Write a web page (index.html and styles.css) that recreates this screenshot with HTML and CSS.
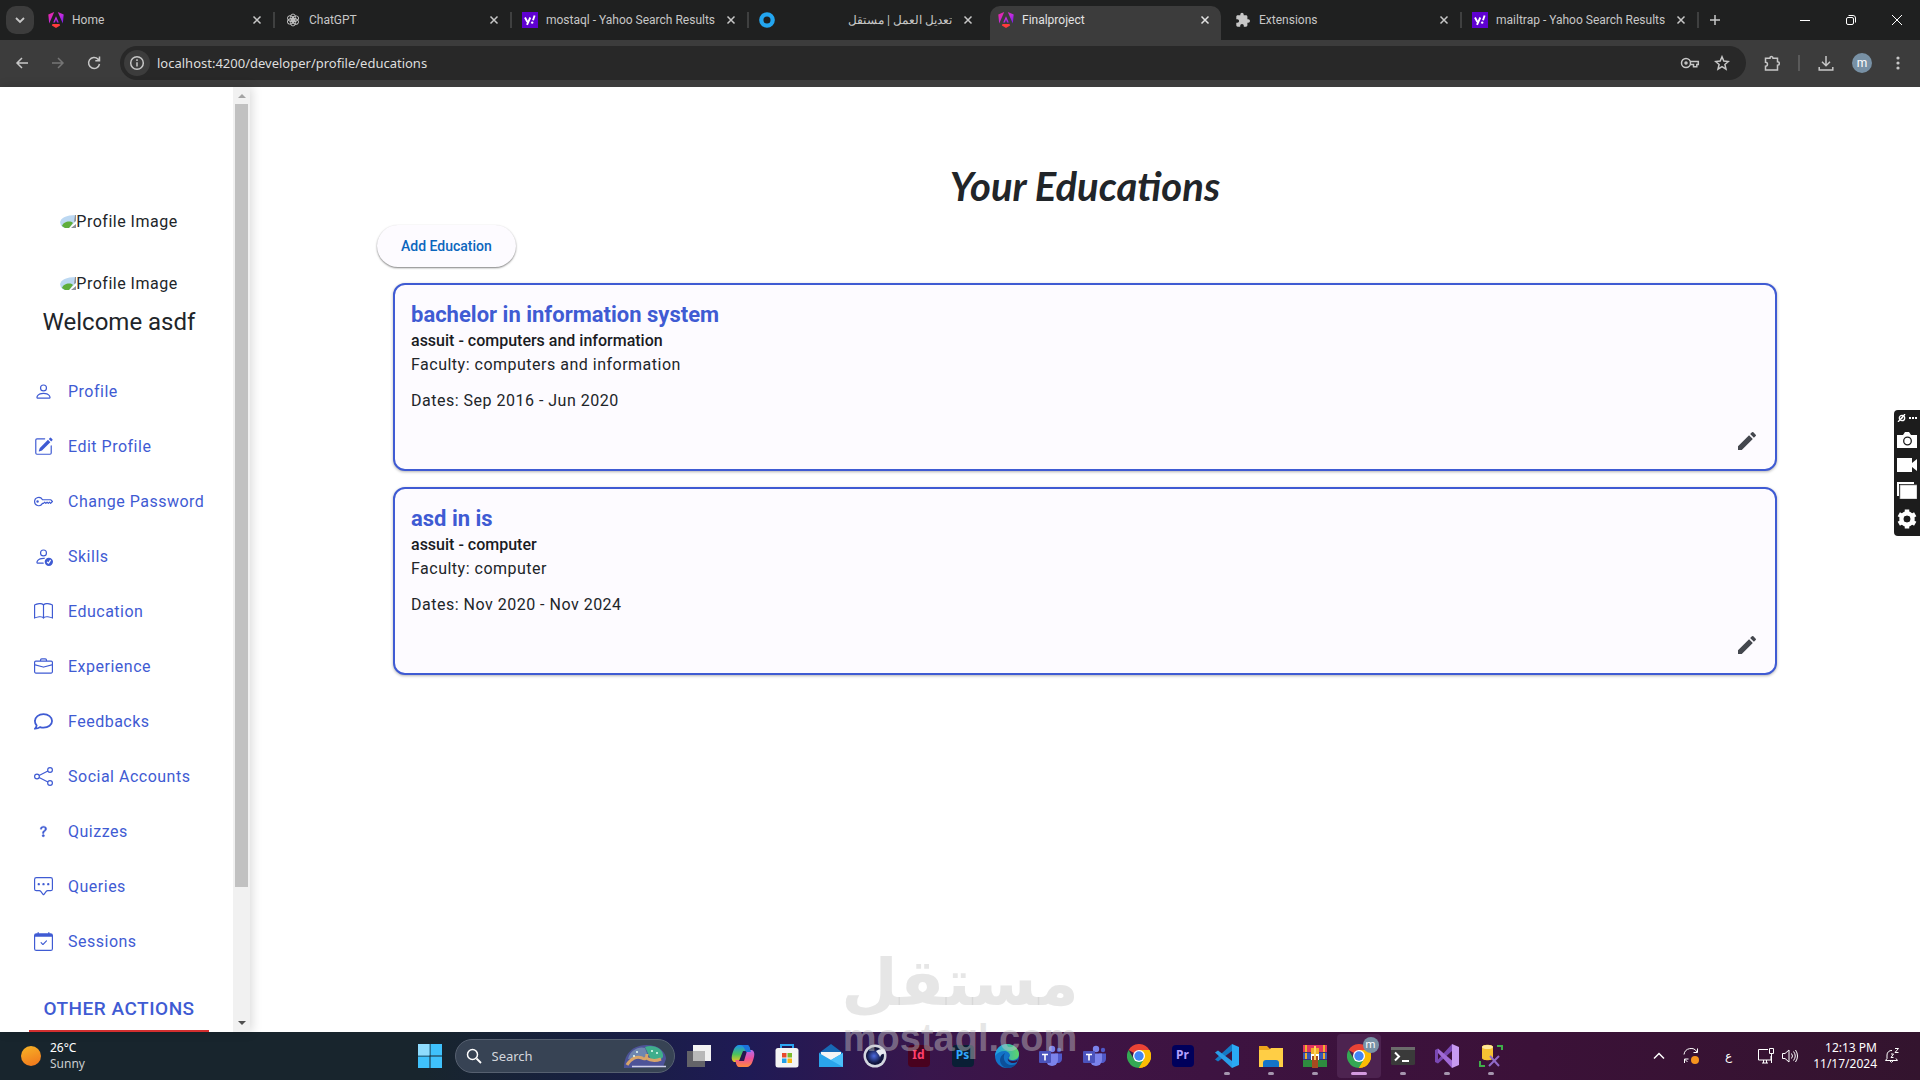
FILE: index.html
```html
<!DOCTYPE html>
<html lang="en">
<head>
    <meta charset="UTF-8">
    <meta name="viewport" content="width=device-width, initial-scale=1.0">
    <title>Finalproject</title>
    <link rel="stylesheet" href="styles.css">
</head>
<body>
    <!-- Shared shapes -->
    <svg class="defs" aria-hidden="true">
        <defs>
            <linearGradient id="ng" x1="0" y1="0" x2="1" y2="1"><stop offset="0" stop-color="#f0269a"/><stop offset=".55" stop-color="#c22be0"/><stop offset="1" stop-color="#6a1be8"/></linearGradient>
            <linearGradient id="cop1" x1="0" y1="0" x2="0" y2="1"><stop offset="0" stop-color="#1a8ff0"/><stop offset=".55" stop-color="#4cc35a"/><stop offset="1" stop-color="#f4c521"/></linearGradient>
            <linearGradient id="cop2" x1="0" y1="0" x2="0" y2="1"><stop offset="0" stop-color="#b06cf0"/><stop offset=".5" stop-color="#ee4f9b"/><stop offset="1" stop-color="#ff8a3c"/></linearGradient>
            <linearGradient id="edge1" x1="0" y1="0" x2="1" y2="0"><stop offset="0" stop-color="#1a9bea"/><stop offset="1" stop-color="#5fd668"/></linearGradient>
            <radialGradient id="ball"><stop offset="0" stop-color="#4b6ae0"/><stop offset="1" stop-color="#10143c"/></radialGradient>
            <symbol id="angular" viewBox="0 0 16 16">
                <path fill="url(#ng)" d="M9.800 0 15.700 2.600 14.800 11.500zM6.200 0 1.200 11.500.3 2.600zM8 4.200 10.800 10.500H9.100L8 7.600 6.900 10.500H5.200z"/>
                <path fill="#ff3b3b" d="M4.500 12h7l.6 1.500L8 16l-4.100-2.500z"/>
            </symbol>
            <symbol id="yahoo" viewBox="0 0 16 16">
                <path fill="#5f01d1" d="M0 0h16v16H0z"/>
                <path fill="none" stroke="#fff" stroke-width="1.900" d="m3 5.500 2.400 4.500M8.300 5.500 5 12.800M12.600 3.500 11 8.200"/>
                <circle cx="10.200" cy="10.600" r="1.200" fill="#fff"/>
            </symbol>
            <symbol id="close" viewBox="0 0 10 10"><path fill="none" stroke="currentColor" stroke-width="1.500" d="m1.500 1.500 7 7m0-7-7 7"/></symbol>
            <symbol id="puzzle" viewBox="0 0 16 16"><path fill="currentColor" d="M13.300 7.300h-.9V4.700c0-.8-.6-1.400-1.400-1.400H8.700v-.9a1.700 1.700 0 0 0-3.400 0v.9H2.700c-.8 0-1.400.6-1.400 1.400v2.500h1a1.800 1.800 0 0 1 0 3.600h-1v2.500c0 .8.6 1.400 1.400 1.400h2.500v-1a1.800 1.800 0 0 1 3.600 0v1H11c.8 0 1.400-.6 1.400-1.400v-2.600h.9a1.700 1.700 0 0 0 0-3.400z"/></symbol>
            <symbol id="teams" viewBox="0 0 24 24">
                <circle cx="13" cy="5" r="3.200" fill="#7b83eb"/><circle cx="20" cy="6" r="2.200" fill="#5059c9"/>
                <path fill="#5059c9" d="M16 9.500h7V15a4 4 0 0 1-6 3.500z"/>
                <path fill="#7b83eb" d="M7 9.500h12V16a6 6 0 0 1-12 0z"/>
                <rect y="7" width="12" height="12" rx="1" fill="#4b53bc"/>
                <path fill="none" stroke="#fff" stroke-width="1.600" d="M3 10.500h6M6 10.500v6"/>
            </symbol>
            <symbol id="chrome" viewBox="0 0 24 24">
                <path fill="#ea4335" d="M12 12 1.600 6A12 12 0 0 1 22.400 6z"/>
                <path fill="#fbbc04" d="M12 12V6h10.400A12 12 0 0 1 12 24z"/>
                <path fill="#34a853" d="m12 12 5.200 3L12 24A12 12 0 0 1 1.600 6l5.200 9z"/>
                <path fill="#fbbc04" d="M17.200 15 12 24A12 12 0 0 0 22.400 6H12z"/>
                <circle cx="12" cy="12" r="6" fill="#fff"/><circle cx="12" cy="12" r="4.700" fill="#4285f4"/>
            </symbol>
            <symbol id="broken" viewBox="0 0 16 14">
                <path fill="#bcd8f2" d="M0 7C1 3 6 0 16 0v6L9 13H4C1 12 0 10 0 7z"/>
                <path fill="#5fae3c" d="M2 11c1-4 8-6 11-3l-4 5H5z"/>
                <path fill="#8b9096" d="M15 0h1v6l-2 1zM16 9v4h-5z"/>
            </symbol>
            <symbol id="pencil" viewBox="0 0 24 24"><path fill="currentColor" d="M3 17.250V21h3.750L17.810 9.940l-3.750-3.750zM20.710 7.040a1 1 0 0 0 0-1.410l-2.340-2.340a1 1 0 0 0-1.410 0l-1.830 1.830 3.750 3.750z"/></symbol>
        </defs>
    </svg>

    <!-- Browser window -->
    <header class="tabs">
        <button class="tab-search" aria-label="Search tabs"><svg viewBox="0 0 10 10" width="10" height="10"><path fill="none" stroke="currentColor" stroke-width="1.800" d="m1 3 4 4 4-4"/></svg></button>
        <div class="tab"><svg class="favicon"><use href="#angular"/></svg><span>Home</span><button aria-label="Close"><svg><use href="#close"/></svg></button></div>
        <div class="tab"><svg class="favicon" viewBox="0 0 16 16"><g fill="none" stroke="#c4c4c4" stroke-width=".9"><ellipse cx="8" cy="5.500" rx="2.600" ry="3.500"/><ellipse cx="8" cy="5.500" rx="2.600" ry="3.500" transform="rotate(60 8 8)"/><ellipse cx="8" cy="5.500" rx="2.600" ry="3.500" transform="rotate(120 8 8)"/><ellipse cx="8" cy="5.500" rx="2.600" ry="3.500" transform="rotate(180 8 8)"/><ellipse cx="8" cy="5.500" rx="2.600" ry="3.500" transform="rotate(240 8 8)"/><ellipse cx="8" cy="5.500" rx="2.600" ry="3.500" transform="rotate(300 8 8)"/></g></svg><span>ChatGPT</span><button aria-label="Close"><svg><use href="#close"/></svg></button></div>
        <div class="tab"><svg class="favicon"><use href="#yahoo"/></svg><span>mostaql - Yahoo Search Results</span><button aria-label="Close"><svg><use href="#close"/></svg></button></div>
        <div class="tab no-line"><svg class="favicon" viewBox="0 0 16 16"><circle cx="8" cy="8" r="5.700" fill="none" stroke="#23a6f0" stroke-width="4.300"/></svg><span dir="rtl">تعديل العمل | مستقل</span><button aria-label="Close"><svg><use href="#close"/></svg></button></div>
        <div class="tab active"><svg class="favicon"><use href="#angular"/></svg><span>Finalproject</span><button aria-label="Close"><svg><use href="#close"/></svg></button></div>
        <div class="tab"><svg class="favicon"><use href="#puzzle"/></svg><span>Extensions</span><button aria-label="Close"><svg><use href="#close"/></svg></button></div>
        <div class="tab"><svg class="favicon"><use href="#yahoo"/></svg><span>mailtrap - Yahoo Search Results</span><button aria-label="Close"><svg><use href="#close"/></svg></button></div>
        <button class="new-tab" aria-label="New tab"><svg viewBox="0 0 12 12" width="12" height="12"><path stroke="currentColor" stroke-width="1.500" d="M6 1v10M1 6h10"/></svg></button>
        <div class="window-buttons">
            <button aria-label="Minimize"><svg viewBox="0 0 12 12"><path stroke="#fff" d="M1 6.500h10"/></svg></button>
            <button aria-label="Restore"><svg viewBox="0 0 12 12"><g fill="none" stroke="#fff"><rect x="1.500" y="3.500" width="7" height="7" rx="1.500"/><path d="M3.500 1.500H8a2.500 2.500 0 0 1 2.500 2.500v4.500"/></g></svg></button>
            <button aria-label="Close window"><svg viewBox="0 0 12 12"><path stroke="#fff" d="m1 1 10 10m0-10L1 11"/></svg></button>
        </div>
    </header>
    <nav class="toolbar">
        <button aria-label="Back"><svg viewBox="0 0 16 16"><path d="M14 8H3m5-5L3 8l5 5"/></svg></button>
        <button class="dim" aria-label="Forward"><svg viewBox="0 0 16 16"><path d="M2 8h11M8 3l5 5-5 5"/></svg></button>
        <button aria-label="Reload"><svg viewBox="0 0 16 16"><path d="M13.500 9A5.500 5.500 0 1 1 12 4.100l1.500 1.500M13.500 1.500v4.300H9.300"/></svg></button>
        <div class="address">
            <button class="info" aria-label="Site information"><svg viewBox="0 0 16 16"><circle cx="8" cy="8" r="6.300"/><path d="M8 7.200v4.300M8 4.300v1.600"/></svg></button>
            <input type="text" aria-label="Address" value="localhost:4200/developer/profile/educations">
            <button aria-label="Passwords"><svg viewBox="0 0 20 16" width="20"><circle cx="6" cy="8" r="4.500"/><circle cx="6" cy="8" r="1"/><path d="M10.300 6.500h8v3h-1.500v2.300h-3.300V9.500h-3.200"/></svg></button>
            <button aria-label="Bookmark"><svg viewBox="0 0 16 16"><path d="m8 1.800 1.800 4.300 4.600.4-3.500 3 1.100 4.600L8 11.700l-4 2.400 1.100-4.600-3.500-3 4.600-.4z"/></svg></button>
        </div>
        <button aria-label="Extensions"><svg viewBox="0 0 16 16"><path d="M1.500 3.200H6c0-2.400 3-2.400 3 0h4.500v3.600c2.400 0 2.400 3.400 0 3.400V15h-12v-3.800c2.600 0 2.600-4 0-4z"/></svg></button>
        <span class="divider"></span>
        <button aria-label="Downloads"><svg viewBox="0 0 16 16"><path d="M8 1v9.500M4 6.800l4 4 4-4M1.200 12v3h13.600v-3"/></svg></button>
        <button class="avatar" aria-label="Account">m</button>
        <button aria-label="Menu"><svg viewBox="0 0 16 16"><g fill="#c7c7c7" stroke="none"><circle cx="8" cy="3" r="1.600"/><circle cx="8" cy="8" r="1.600"/><circle cx="8" cy="13" r="1.600"/></g></svg></button>
    </nav>

    <!-- Page -->
    <div class="page">
        <aside class="sidebar">
            <div class="sidebar-content">
                <div class="profile-image"><svg><use href="#broken"/></svg>Profile Image</div>
                <div class="profile-image"><svg><use href="#broken"/></svg>Profile Image</div>
                <h3>Welcome asdf</h3>
                <ul class="menu">
                    <li><a href="#"><svg viewBox="0 0 16 16"><path d="M8 8a3 3 0 1 0 0-6 3 3 0 0 0 0 6m2-3a2 2 0 1 1-4 0 2 2 0 0 1 4 0m4 8c0 1-1 1-1 1H3s-1 0-1-1 1-4 6-4 6 3 6 4m-1-.004c-.001-.246-.154-.986-.832-1.664C11.516 10.680 10.289 10 8 10s-3.516.68-4.168 1.332c-.678.678-.83 1.418-.832 1.664z"/></svg>Profile</a></li>
                    <li><a href="#"><svg viewBox="0 0 16 16"><path d="M15.502 1.940a.5.5 0 0 1 0 .706L14.459 3.690l-2-2L13.502.646a.5.5 0 0 1 .707 0l1.293 1.293zm-1.750 2.456-2-2L4.939 9.210a.5.5 0 0 0-.121.196l-.805 2.414a.25.25 0 0 0 .316.316l2.414-.805a.5.5 0 0 0 .196-.12z"/><path fill-rule="evenodd" d="M1 13.500A1.500 1.500 0 0 0 2.500 15h11a1.500 1.500 0 0 0 1.500-1.500v-6a.5.5 0 0 0-1 0v6a.5.5 0 0 1-.5.5h-11a.5.5 0 0 1-.5-.5v-11a.5.5 0 0 1 .5-.5H9a.5.5 0 0 0 0-1H2.500A1.500 1.500 0 0 0 1 2.500z"/></svg>Edit Profile</a></li>
                    <li><a href="#"><svg viewBox="0 0 16 16"><path d="M0 8a4 4 0 0 1 7.465-2H14a.5.5 0 0 1 .354.146l1.500 1.500a.5.5 0 0 1 0 .708l-1.500 1.500a.5.5 0 0 1-.708 0L13 9.207l-.646.647a.5.5 0 0 1-.708 0L11 9.207l-.646.647a.5.5 0 0 1-.708 0L9 9.207l-.646.647A.5.5 0 0 1 8 10h-.535A4 4 0 0 1 0 8m4-3a3 3 0 1 0 2.712 4.285A.5.5 0 0 1 7.163 9h.63l.853-.854a.5.5 0 0 1 .708 0l.646.647.646-.647a.5.5 0 0 1 .708 0l.646.647.646-.647a.5.5 0 0 1 .708 0l.646.647.793-.793-1-1h-6.630a.5.5 0 0 1-.451-.285A3 3 0 0 0 4 5"/><path d="M4 8a1 1 0 1 1-2 0 1 1 0 0 1 2 0"/></svg>Change Password</a></li>
                    <li><a href="#"><svg viewBox="0 0 16 16"><path d="M12.500 16a3.500 3.500 0 1 0 0-7 3.500 3.500 0 0 0 0 7m1.679-4.493-1.335 2.226a.75.75 0 0 1-1.174.144l-.774-.773a.5.5 0 0 1 .708-.708l.547.548 1.170-1.951a.5.5 0 1 1 .858.514M11 5a3 3 0 1 1-6 0 3 3 0 0 1 6 0M8 7a2 2 0 1 0 0-4 2 2 0 0 0 0 4"/><path d="M8.256 14a4.500 4.500 0 0 1-.229-1.004H3c.001-.246.154-.986.832-1.664C4.484 10.680 5.711 10 8 10q.39 0 .74.025c.226-.341.496-.65.804-.918Q8.844 9.002 8 9c-5 0-6 3-6 4s1 1 1 1z"/></svg>Skills</a></li>
                    <li><a href="#"><svg viewBox="0 0 16 16"><path d="M1 2.828c.885-.37 2.154-.769 3.388-.893 1.330-.134 2.458.063 3.112.752v9.746c-.935-.53-2.120-.603-3.213-.493-1.180.12-2.370.461-3.287.811zm7.500-.141c.654-.689 1.782-.886 3.112-.752 1.234.124 2.503.523 3.388.893v9.923c-.918-.35-2.107-.692-3.287-.81-1.094-.111-2.278-.039-3.213.492zM8 1.783C7.015.936 5.587.81 4.287.94c-1.514.153-3.042.672-3.994 1.105A.5.5 0 0 0 0 2.500v11a.5.5 0 0 0 .707.455c.882-.4 2.303-.881 3.680-1.020 1.409-.142 2.590.087 3.223.877a.5.5 0 0 0 .78 0c.633-.79 1.814-1.019 3.222-.877 1.378.139 2.800.62 3.681 1.020A.5.5 0 0 0 16 13.500v-11a.5.5 0 0 0-.293-.455c-.952-.433-2.480-.952-3.994-1.105C10.413.809 8.985.936 8 1.783"/></svg>Education</a></li>
                    <li><a href="#"><svg viewBox="0 0 16 16"><path d="M6.500 1A1.500 1.500 0 0 0 5 2.500V3H1.500A1.500 1.500 0 0 0 0 4.500v8A1.500 1.500 0 0 0 1.500 14h13a1.500 1.500 0 0 0 1.500-1.500v-8A1.500 1.500 0 0 0 14.500 3H11v-.5A1.500 1.500 0 0 0 9.500 1zm0 1h3a.5.5 0 0 1 .5.5V3H6v-.5a.5.5 0 0 1 .5-.5m1.886 6.914L15 7.151V12.500a.5.5 0 0 1-.5.5h-13a.5.5 0 0 1-.5-.5V7.150l6.614 1.764a1.500 1.500 0 0 0 .772 0M1.500 4h13a.5.5 0 0 1 .5.5v1.616L8.129 7.948a.5.5 0 0 1-.258 0L1 6.116V4.500a.5.5 0 0 1 .5-.5"/></svg>Experience</a></li>
                    <li><a href="#"><svg viewBox="0 0 16 16"><path fill="none" stroke="currentColor" stroke-width="1.500" d="M8 1.800c4 0 7.200 2.500 7.200 5.700s-3.200 5.700-7.200 5.700c-1 0-2-.2-2.900-.5-.9.700-2.300 1.300-4.200 1.300.8-.8 1.200-1.700 1.300-2.700A5 5 0 0 1 .8 7.500C.8 4.300 4 1.800 8 1.800z"/></svg>Feedbacks</a></li>
                    <li><a href="#"><svg viewBox="0 0 16 16"><g fill="none" stroke="currentColor"><circle cx="13.500" cy="2.500" r="2"/><circle cx="2.500" cy="8" r="2"/><circle cx="13.500" cy="13.500" r="2"/><path d="m4.300 7.100 7.400-3.700M4.300 8.900l7.400 3.700"/></g></svg>Social Accounts</a></li>
                    <li><a href="#"><svg viewBox="0 0 16 16"><path stroke="currentColor" stroke-width=".3" d="M5.250 6.033h1.320c0-.781.458-1.384 1.360-1.384.685 0 1.313.343 1.313 1.168 0 .635-.374.927-.965 1.371-.673.489-1.206 1.060-1.168 1.987l.007.463h1.307v-.355c0-.718.273-.927 1.010-1.486.609-.463 1.244-.977 1.244-2.056 0-1.511-1.276-2.241-2.673-2.241-1.326 0-2.786.647-2.754 2.533m1.562 5.516c0 .533.425.927 1.010.927.609 0 1.028-.394 1.028-.927 0-.552-.420-.94-1.029-.94-.584 0-1.009.388-1.009.94"/></svg>Quizzes</a></li>
                    <li><a href="#"><svg viewBox="0 0 16 16"><path d="M14 1a1 1 0 0 1 1 1v8a1 1 0 0 1-1 1h-2.500a2 2 0 0 0-1.600.8L8 14.333 6.100 11.800a2 2 0 0 0-1.600-.8H2a1 1 0 0 1-1-1V2a1 1 0 0 1 1-1zM2 0a2 2 0 0 0-2 2v8a2 2 0 0 0 2 2h2.500a1 1 0 0 1 .8.4l1.900 2.533a1 1 0 0 0 1.600 0l1.900-2.533a1 1 0 0 1 .8-.4H14a2 2 0 0 0 2-2V2a2 2 0 0 0-2-2z"/><path d="M5 6a1 1 0 1 1-2 0 1 1 0 0 1 2 0m4 0a1 1 0 1 1-2 0 1 1 0 0 1 2 0m4 0a1 1 0 1 1-2 0 1 1 0 0 1 2 0"/></svg>Queries</a></li>
                    <li><a href="#"><svg viewBox="0 0 16 16"><path d="M10.854 7.146a.5.5 0 0 1 0 .708l-3 3a.5.5 0 0 1-.708 0l-1.500-1.500a.5.5 0 1 1 .708-.708L7.500 9.793l2.646-2.647a.5.5 0 0 1 .708 0"/><path d="M3.500 0a.5.5 0 0 1 .5.5V1h8V.5a.5.5 0 0 1 1 0V1h1a2 2 0 0 1 2 2v11a2 2 0 0 1-2 2H2a2 2 0 0 1-2-2V3a2 2 0 0 1 2-2h1V.5a.5.5 0 0 1 .5-.5M1 4v10a1 1 0 0 0 1 1h12a1 1 0 0 0 1-1V4z"/></svg>Sessions</a></li>
                </ul>
                <h4>OTHER ACTIONS</h4>
            </div>
            <div class="scrollbar">
                <span class="arrow up"></span>
                <div class="track"><div class="thumb"></div></div>
                <span class="arrow down"></span>
            </div>
        </aside>

        <main class="content">
            <h1>Your Educations</h1>
            <button class="add-btn">Add Education</button>
            <section class="card">
                <h2>bachelor in information system</h2>
                <h5>assuit - computers and information</h5>
                <p>Faculty: computers and information</p>
                <p class="dates">Dates: Sep 2016 - Jun 2020</p>
                <button class="edit-btn" aria-label="Edit"><svg><use href="#pencil"/></svg></button>
            </section>
            <section class="card">
                <h2>asd in is</h2>
                <h5>assuit - computer</h5>
                <p>Faculty: computer</p>
                <p class="dates">Dates: Nov 2020 - Nov 2024</p>
                <button class="edit-btn" aria-label="Edit"><svg><use href="#pencil"/></svg></button>
            </section>
        </main>

        <div class="capture">
            <svg viewBox="0 0 20 8" height="8"><g fill="none" stroke="#fff" stroke-width="1.300"><circle cx="5" cy="4" r="2.700"/><path d="M1 8 8 0M4 5l2-2"/></g><path fill="#fff" d="M12 3h2v2h-2zM15 3h2v2h-2zM18 3h2v2h-2z"/></svg>
            <svg viewBox="0 0 20 16" height="16"><path fill="#fff" d="M0 3h6l2-3h4l2 3h6v13H0z"/><circle cx="10.500" cy="9" r="3.800" fill="none" stroke="#1c1c1c" stroke-width="1.300"/></svg>
            <svg viewBox="0 0 20 14" height="14"><path fill="#fff" d="M0 0h15v5l5-4v12l-5-4v5H0z"/></svg>
            <svg viewBox="0 0 20 17" height="17"><path fill="#fff" d="M0 0h17v2H2v12H0z"/><path fill="#fff" stroke="#999" stroke-width=".7" d="M3 3h17v14H3z"/></svg>
            <svg viewBox="0 0 20 20" height="20"><circle cx="10" cy="10" r="5.500" fill="none" stroke="#fff" stroke-width="4.500"/><path stroke="#fff" stroke-width="4.500" d="M10 .5v4M10 15.500v4M1.800 5.300l3.400 2M14.800 12.700l3.400 2M1.800 14.700l3.400-2M14.800 7.300l3.400-2"/><circle cx="10" cy="10" r="3.300" fill="#1c1c1c"/></svg>
        </div>
    </div>

    <!-- Windows taskbar -->
    <footer class="taskbar">
        <div class="weather"><span class="sun"></span><div>26°C<br><span class="sky">Sunny</span></div></div>
        <div class="apps">
            <button aria-label="Start"><svg viewBox="0 0 24 24"><path fill="#3fc1fb" d="M0 0h11.500v11.500H0zM12.500 0H24v11.500H12.500zM0 12.500h11.500V24H0zM12.500 12.500H24V24H12.500z"/><path fill="#8fdcfd" d="M0 0h11.500v11.500H0z"/></svg></button>
            <label class="search">
                <svg viewBox="0 0 16 16" width="16" height="16"><circle cx="6.500" cy="6.500" r="5" fill="none" stroke="#fff" stroke-width="1.500"/><path stroke="#fff" stroke-width="1.800" d="m10.500 10.500 4.500 4.500"/></svg>
                <input type="text" placeholder="Search" aria-label="Search">
                <svg viewBox="0 0 44 24" width="44" height="24"><path fill="#4d5398" d="M0 24C0 12 6 2 22 1c14 0 20 8 20 14l-3 8z"/><path fill="#3fae8c" d="M21 3c9-3 19 2 18 10-3 4-8 4-13 1z"/><path fill="#6f86b0" d="M4 15C6 6 15 2 21 4l3 8-8 2z"/><path fill="none" stroke="#d8a56a" stroke-width="3" d="M3 21c4-7 10-9 15-7 3 2 5 0 5-4m-1 4c5 3 10 3 15 1"/><path stroke="#cfd0ea" stroke-width="1.500" d="M8 22.500h34"/><g fill="#e8fff2"><circle cx="28" cy="7" r="1"/><circle cx="33" cy="9" r="1"/><circle cx="13" cy="8" r="1"/><circle cx="10" cy="12" r="1"/></g></svg>
            </label>
            <button aria-label="Task view"><svg viewBox="0 0 24 24"><path fill="#f2f2f2" d="M6 1h18v16H6z"/><path fill="#6b6b6b" fill-opacity=".9" d="M0 7h18v16H0z"/><path fill="#b9b9b9" d="M6 7h12v10H6z"/></svg></button>
            <button aria-label="Copilot"><svg viewBox="0 0 24 24"><path fill="url(#cop1)" d="M8 1h8c3 0 3 6 4 7h-7c-2 0-3 9-5 10H3c-4-2-2-8 0-13 1-2 3-4 5-4z"/><path fill="url(#cop2)" d="M16 23H8c-3 0-3-6-4-7h7c2 0 3-9 5-10h5c4 2 2 8 0 13-1 2-3 4-5 4z"/><path fill="#27184f" d="M12 7h4l-3 10H8z"/><path fill="#1c73dc" d="M9 1h7c3 0 3 5 4 7h-4c-3 0-1-6-7-7z"/></svg></button>
            <button aria-label="Store"><svg viewBox="0 0 24 24"><path fill="none" stroke="#2aa5f2" stroke-width="2" d="M6 6V1h12v5"/><rect x=".5" y="4" width="23" height="19.500" rx="2.500" fill="#f4f4f4"/><path fill="#e8492c" d="M7 9h4.500v4.500H7z"/><path fill="#7cba2b" d="M12.500 9H17v4.500h-4.500z"/><path fill="#21a0e8" d="M7 14.500h4.500V19H7z"/><path fill="#f9b513" d="M12.500 14.500H17V19h-4.500z"/></svg></button>
            <button aria-label="Mail"><svg viewBox="0 0 24 24"><path fill="#1769b5" d="M0 9 12 0l12 9v4H0z"/><path fill="#f5f5f5" d="M2 8h20v3l-10 6-10-6z"/><path fill="#2aa4ea" d="M0 9v14h24V9l-12 7z"/><path fill="#4cc0fa" d="M24 9v14L10 15l2 1z"/></svg></button>
            <button aria-label="Cinema 4D"><svg viewBox="0 0 24 24"><circle cx="12" cy="12" r="11.500" fill="#d3d6df"/><circle cx="12" cy="12" r="9" fill="#10143c"/><circle cx="11" cy="12" r="7.500" fill="url(#ball)"/><path fill="#e9ebf2" d="M13 7c3-2 7-3 9-1l1 4c-3-1-5 0-6 3-1-3-3-4-4-6z"/></svg></button>
            <button aria-label="InDesign"><span class="adobe id">Id</span></button>
            <button aria-label="Photoshop"><span class="adobe ps">Ps</span></button>
            <button aria-label="Edge"><svg viewBox="0 0 24 24"><circle cx="12" cy="12" r="12" fill="#1273c8"/><path fill="url(#edge1)" d="M0 12C1 4 6 0 12 0c7 0 12 5 12 10 0 4-3 6-6 6-4 0-5-2-3-4 0-6-10-7-15 0z"/><path fill="#0c4f99" d="M10 9c-3 5 0 12 7 12 2 0 4-1 5-2-3 5-9 6-13 4-6-4-5-11 1-14z"/><path fill="#351445" d="M14 12c-2 2-1 5 4 5 2 0 4-1 5-2l-1 3c-5 3-12-1-8-6z"/></svg></button>
            <button aria-label="Teams"><svg><use href="#teams"/></svg></button>
            <button aria-label="Teams"><svg><use href="#teams"/></svg></button>
            <button aria-label="Chrome"><svg><use href="#chrome"/></svg></button>
            <button aria-label="Premiere"><span class="adobe pr">Pr</span></button>
            <button class="running" aria-label="VS Code"><svg viewBox="0 0 24 24"><path fill="#1478c4" d="M17 0v7L3 17.500 0 15.500z"/><path fill="#2a9de8" d="m0 8.500 3-2L17 17v7z"/><path fill="#2aa9f5" d="m17 0 7 3v18l-7 3z"/></svg></button>
            <button class="running" aria-label="File Explorer"><svg viewBox="0 0 24 24"><path fill="#eda41c" d="M0 2h8l3 3v4H0z"/><path fill="#ffce45" d="M0 6h10l2-2h12v19H0z"/><path fill="#1474c8" d="M4 23v-4c0-2 1-3 3-3h10c2 0 3 1 3 3v4z"/></svg></button>
            <button class="running" aria-label="WinRAR"><svg viewBox="0 0 24 24"><path fill="#e0355e" d="M0 1h24v7H0z"/><path fill="#3858b4" d="M0 8.500h24v7H0z"/><path fill="#2e8b3f" d="M0 16h24v7H0z"/><path fill="#f0b02c" d="M2 1h2v7H2zM20 1h2v7h-2zM2 9h2v6H2zM20 9h2v6h-2zM8 4h8v9H8z"/><path fill="#fff" d="M8 10h8v6H8z"/><path fill="#a84a20" d="M9 12h6v12H9z"/><path stroke="#ffd45c" stroke-width="2" d="M12 2v14"/></svg></button>
            <button class="running current" aria-label="Chrome"><svg><use href="#chrome"/></svg><span class="badge">m</span></button>
            <button class="running" aria-label="Terminal"><svg viewBox="0 0 24 24"><rect y="3" width="24" height="18" rx="1.500" fill="#3a3a3a"/><path fill="#6b6b6b" d="M0 3h24v3H0z"/><path fill="none" stroke="#fff" stroke-width="2" d="m4 8.500 4 4-4 4M11 17h7"/></svg></button>
            <button class="running" aria-label="Visual Studio"><svg viewBox="0 0 24 24"><path fill="#7a48b4" d="m0 6 3-1.500V19.500L0 18zM17 0v7L3 19.500v-4z"/><path fill="#a06ad6" d="m3 4.500 14 12V24L3 9z"/><path fill="#c79af0" d="m17 0 7 3v18l-7 3z"/></svg></button>
            <button class="running" aria-label="SQL Server"><svg viewBox="0 0 24 24"><path fill="#f5c133" d="M3 3c0-3 11-3 11 0v11c0 3-11 3-11 0z"/><ellipse cx="8.500" cy="3" rx="5.500" ry="2" fill="#ffe79a"/><path fill="none" stroke="#3fae49" stroke-width="2" d="M18 2h5v4M1 17v5h5"/><path stroke="#9069c8" stroke-width="2" d="m11 12 9 10M20 12 10 22"/></svg></button>
        </div>
        <div class="tray">
            <svg class="chevron" viewBox="0 0 12 12"><path d="m1 8.500 5-5 5 5" stroke-width="1.500"/></svg>
            <svg viewBox="0 0 16 16"><path d="M1 6.500A7 7 0 0 1 14 4m.5-3.500v4h-4M1.500 15v-4h4m-4 0 3 3"/><circle cx="12" cy="12" r="4" fill="#f7941e" stroke="none"/></svg>
            <span class="lang">ع</span>
            <svg viewBox="0 0 16 16"><path d="M10 1.500H.5v10.500H13V8M4 15h6M5.500 12v3M8.500 12v3M11.500.5h4v5h-4zM13.500 5.500V15"/></svg>
            <svg class="sound" viewBox="0 0 16 16"><path d="M.5 5.500v5H3l4 3.500V2L3 5.500zM9.500 5.500q2 2.500 0 5M11.500 3.500q3.500 4.500 0 9M13.500 2q4 6 0 12"/></svg>
            <time>12:13 PM<br>11/17/2024</time>
            <svg viewBox="0 0 16 16"><path d="M8 2.500A4.500 4.500 0 0 0 3 7v3.500l-1.500 2h12l-1.500-2M6 13q1.500 2.500 3 0M11 .5h3.500L11 4.500h3.500M7 6h2.500L7 9.500h2.500"/></svg>
        </div>
    </footer>

    <div class="watermark"><span lang="ar" dir="rtl">مستقل</span><span>mostaql.com</span></div>
</body>
</html>
```
FILE: styles.css
```css
/* General Styling */
* {
    box-sizing: border-box;
}

body {
    font-family: Roboto, sans-serif;
    font-size: 16px;
    line-height: 24px;
    margin: 0;
    height: 100vh;
    display: flex;
    flex-direction: column;
    color: #212529;
    background: #fff;
    overflow: hidden;
}

h1, h2, h3, h4, h5, p, ul {
    margin: 0;
    padding: 0;
}

button, input {
    font: inherit;
    color: inherit;
    border: none;
    background: none;
    padding: 0;
}

button {
    display: flex;
    align-items: center;
    justify-content: center;
    flex: none;
    cursor: pointer;
}

svg {
    flex: none;
}

.defs {
    position: absolute;
    width: 0;
    height: 0;
}

/* Browser tabs */
.tabs {
    display: flex;
    align-items: flex-end;
    height: 40px;
    flex: none;
    padding-left: 6px;
    background: #1f2020;
    color: #c7c7c7;
    font-family: Roboto, "Noto Sans", sans-serif;
    font-size: 12px;
}

.tab-search {
    width: 28px;
    height: 28px;
    margin: 0 4px 6px 0;
    border-radius: 10px;
    background: #3c3c3c;
}

.tab {
    display: flex;
    align-items: center;
    gap: 8px;
    flex: 0 1 237px;
    min-width: 0;
    height: 34px;
    padding: 0 10px 6px;
    position: relative;
    white-space: nowrap;
}

.tab::after {
    content: "";
    position: absolute;
    right: 0;
    top: 6px;
    width: 2px;
    height: 16px;
    background: #3f4040;
}

.tab.active::after,
.tab.no-line::after {
    display: none;
}

.tab.active {
    flex-basis: 231px;
    margin: 0 4px;
    padding: 0 8px 6px;
    border-radius: 10px 10px 0 0;
    background: #3c3c3c;
    color: #e3e3e3;
}

.tab span {
    flex: 1;
    min-width: 0;
    overflow: hidden;
}

.favicon {
    width: 16px;
    height: 16px;
}

.tab button {
    width: 16px;
    height: 16px;
}

.tab button svg {
    width: 10px;
    height: 10px;
}

.new-tab {
    width: 28px;
    height: 28px;
    margin: 0 0 6px 2px;
}

.window-buttons {
    display: flex;
    margin-left: auto;
}

.window-buttons button {
    width: 46px;
    height: 40px;
}

.window-buttons svg {
    width: 12px;
    height: 12px;
}

/* Browser toolbar */
.toolbar {
    display: flex;
    align-items: center;
    height: 47px;
    flex: none;
    padding: 0 4px 1px;
    background: #3c3c3c;
    color: #c7c7c7;
}

.toolbar button {
    width: 36px;
    height: 34px;
}

.toolbar svg {
    height: 16px;
    fill: none;
    stroke: currentColor;
    stroke-width: 1.5;
}

.toolbar .dim {
    color: #757575;
}

.address {
    display: flex;
    align-items: center;
    flex: 1;
    height: 34px;
    margin: 0 8px;
    padding: 0 8px 0 4px;
    border-radius: 17px;
    background: #282828;
}

.address input {
    flex: 1;
    padding-left: 7px;
    font-family: "Noto Sans", sans-serif;
    font-size: 13px;
    color: #dedede;
}

.address button {
    width: 32px;
}

.toolbar .info {
    width: 26px;
    height: 26px;
    border-radius: 50%;
    background: #3c3c3c;
}

.divider {
    width: 2px;
    height: 16px;
    margin: 0 8px;
    background: #5a5a5a;
}

.toolbar .avatar {
    width: 20px;
    height: 20px;
    margin: 0 8px;
    border-radius: 50%;
    background: #7891a5;
    color: #fff;
    font-size: 12px;
}

/* Page */
.page {
    display: flex;
    flex: 1;
    min-height: 0;
    position: relative;
}

.sidebar {
    display: flex;
    flex: none;
    width: 250px;
    box-shadow: 2px 0 10px rgba(0, 0, 0, 0.15);
}

.sidebar-content {
    flex: 1;
    padding: 123px 24px 0 29px;
    overflow: hidden;
    letter-spacing: 0.5px;
}

.profile-image {
    display: flex;
    align-items: center;
    justify-content: center;
    margin-bottom: 38px;
}

.profile-image + .profile-image {
    margin-bottom: 10px;
}

.profile-image svg {
    width: 16px;
    height: 14px;
    border-radius: 50% 0 0 50%;
}

.sidebar h3 {
    font-size: 24px;
    line-height: 32px;
    font-weight: 400;
    text-align: center;
    white-space: nowrap;
    margin-bottom: 26px;
    letter-spacing: normal;
}

.menu {
    list-style: none;
}

.menu a {
    display: flex;
    align-items: center;
    gap: 15px;
    height: 55px;
    padding-left: 5px;
    color: #3f5bd3;
    text-decoration: none;
    white-space: nowrap;
}

.menu svg {
    width: 19px;
    height: 19px;
    fill: currentColor;
}

.sidebar h4 {
    margin-top: 28px;
    padding-bottom: 9px;
    border-bottom: 3px solid #d32f2f;
    font-size: 19px;
    font-weight: 500;
    text-align: center;
    white-space: nowrap;
    color: #3f5bd3;
}

.scrollbar {
    display: flex;
    flex-direction: column;
    align-items: center;
    justify-content: space-between;
    width: 17px;
    padding: 7px 0;
    background: #f1f1f1;
}

.arrow {
    border: 4px solid transparent;
}

.arrow.up {
    border-top: none;
    border-bottom-color: #a3a3a3;
}

.arrow.down {
    border-bottom: none;
    border-top-color: #505050;
}

.track {
    flex: 1;
    width: 13px;
    margin: 6px 0;
}

.thumb {
    height: 86%;
    background: #c1c1c1;
}

/* Educations */
.content {
    flex: 1;
    padding: 72px 127px 0;
}

.content h1 {
    font-family: Lato, sans-serif;
    font-size: 40px;
    line-height: 54px;
    font-weight: 700;
    font-style: italic;
    text-align: center;
    margin-bottom: 12px;
}

.add-btn {
    height: 42px;
    padding: 0 24px;
    margin-bottom: 16px;
    border-radius: 21px;
    background: #fdfbff;
    box-shadow: 0 1px 2px rgba(0, 0, 0, 0.5);
    color: #0b66bd;
    font-size: 14px;
    font-weight: 500;
}

.card {
    display: flex;
    flex-direction: column;
    margin: 0 16px 16px;
    padding: 16px;
    border: 2px solid #3f5bd3;
    border-radius: 12px;
    background: #fdfbff;
    box-shadow: 0 1px 3px rgba(0, 0, 0, 0.3);
}

.card h2 {
    font-size: 22px;
    line-height: 28px;
    font-weight: 700;
    color: #3f5bd3;
}

.card h5 {
    font-size: 16px;
    font-weight: 500;
    color: #1a1b1f;
}

.card p {
    letter-spacing: 0.5px;
}

.card .dates {
    margin: 12px 0 16px;
}

.edit-btn {
    align-self: flex-end;
    width: 24px;
    height: 24px;
    color: #44474e;
}

.edit-btn svg {
    width: 24px;
    height: 24px;
}

/* Screen capture widget */
.capture {
    position: absolute;
    right: 0;
    top: 323px;
    display: flex;
    flex-direction: column;
    align-items: center;
    justify-content: space-between;
    width: 26px;
    height: 126px;
    padding: 4px 3px 7px;
    border-radius: 4px 0 0 4px;
    background: #1c1c1c;
}

.capture svg {
    width: 20px;
}

/* Taskbar */
.taskbar {
    display: grid;
    grid-template-columns: 1fr auto 1fr;
    align-items: center;
    height: 48px;
    flex: none;
    background: linear-gradient(90deg, #18252d 0%, #18252d 22%, #17203f 30%, #1f1a55 39%, #38164c 48%, #3e1445 55%, #3b1138 80%, #33142e 100%);
    color: #fff;
    font-family: "Noto Sans", sans-serif;
    font-size: 12px;
    line-height: 16px;
}

.weather {
    display: flex;
    align-items: center;
    gap: 9px;
    padding-left: 21px;
}

.sun {
    width: 20px;
    height: 20px;
    border-radius: 50%;
    background: linear-gradient(160deg, #f7b526, #f0731c);
}

.sky {
    color: #c9cdd0;
}

.apps {
    display: flex;
    align-items: center;
}

.apps button {
    position: relative;
    width: 44px;
    height: 44px;
}

.apps button svg {
    width: 24px;
    height: 24px;
}

.search {
    display: flex;
    align-items: center;
    gap: 10px;
    width: 220px;
    height: 34px;
    margin: 0 2px 0 3px;
    padding: 0 6px 0 10px;
    border: 1px solid #566070;
    border-radius: 17px;
    background: #374354;
}

.search input {
    flex: 1;
    min-width: 0;
    font-size: 13px;
}

.search input::placeholder {
    color: #d3d6dc;
}

.adobe {
    width: 22px;
    height: 22px;
    border-radius: 4px;
    font-size: 12px;
    line-height: 20px;
    font-weight: 700;
}

.id {
    background: #49021f;
    color: #ff3f6c;
}

.ps {
    background: #0a1f35;
    color: #31a8ff;
}

.pr {
    background: #00005b;
    color: #b3a0ff;
}

.running::after {
    content: "";
    position: absolute;
    bottom: 3px;
    width: 6px;
    height: 3px;
    border-radius: 2px;
    background: #a596ae;
}

.current {
    border-radius: 4px;
    background: #4d2350;
}

.current::after {
    width: 16px;
    background: #d49ae0;
}

.badge {
    position: absolute;
    top: 3px;
    right: 2px;
    width: 16px;
    height: 16px;
    border-radius: 50%;
    background: #7891a5;
    font-size: 11px;
    line-height: 14px;
}

.tray {
    display: flex;
    align-items: center;
    justify-content: flex-end;
    padding-right: 20px;
}

.tray svg {
    width: 16px;
    height: 16px;
    fill: none;
    stroke: #fff;
}

.tray .chevron {
    width: 12px;
    height: 12px;
    margin-right: 18px;
}

.lang {
    margin: 0 26px;
}

.sound {
    margin-left: 8px;
}

.tray time {
    margin: 0 7px 0 15px;
    text-align: right;
}

/* Watermark over the bottom of the window */
.watermark {
    position: absolute;
    left: 0;
    right: 0;
    bottom: 20px;
    display: flex;
    flex-direction: column;
    align-items: center;
    font-family: "Liberation Sans", "DejaVu Sans", sans-serif;
    font-size: 38px;
    line-height: 44px;
    font-weight: 700;
    color: rgba(200, 200, 200, 0.45);
    pointer-events: none;
}

.watermark span:first-child {
    font-family: "DejaVu Sans", sans-serif;
    font-size: 65px;
    line-height: 66px;
}
```
